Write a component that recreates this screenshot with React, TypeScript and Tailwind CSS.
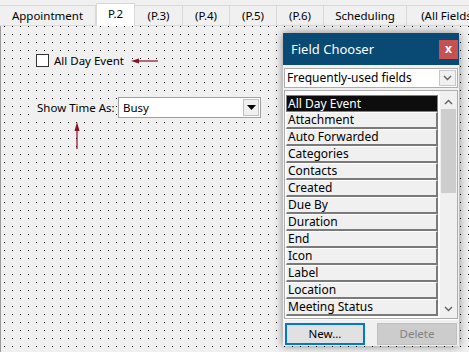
import React from "react";

const tabs = [
  { label: "Appointment", w: 96 },
  { label: "P.2", w: 39, active: true },
  { label: "(P.3)", w: 48 },
  { label: "(P.4)", w: 47 },
  { label: "(P.5)", w: 47 },
  { label: "(P.6)", w: 47 },
  { label: "Scheduling", w: 83 },
  { label: "(All Fields", w: 80 },
];

const fields = [
  "Attachment",
  "Auto Forwarded",
  "Categories",
  "Contacts",
  "Created",
  "Due By",
  "Duration",
  "End",
  "Icon",
  "Label",
  "Location",
  "Meeting Status",
];

function Dots() {
  return (
    <svg className="absolute inset-0 h-full w-full" aria-hidden>
      <defs>
        <pattern id="dots" x="3" y="0" width="8" height="8" patternUnits="userSpaceOnUse">
          <rect x="0" y="0" width="1" height="1" fill="#000" />
        </pattern>
      </defs>
      <rect width="100%" height="100%" fill="url(#dots)" />
    </svg>
  );
}

function ArrowLeft() {
  return (
    <svg width="28" height="8" viewBox="0 0 28 8" aria-hidden>
      <line x1="4" y1="4" x2="27" y2="4" stroke="#8b1020" strokeWidth="1.2" />
      <path d="M0 4 L8 1.5 L8 6.5 Z" fill="#8b1020" />
    </svg>
  );
}

function ArrowUp() {
  return (
    <svg width="8" height="27" viewBox="0 0 8 27" aria-hidden>
      <line x1="4" y1="5" x2="4" y2="27" stroke="#8b1020" strokeWidth="1.2" />
      <path d="M4 0 L6.5 9 L1.5 9 Z" fill="#8b1020" />
    </svg>
  );
}

function Chevron({ up = false }: { up?: boolean }) {
  return (
    <svg width="9" height="6" viewBox="0 0 9 6" aria-hidden>
      <path
        d={up ? "M1 5 L4.5 1.5 L8 5" : "M1 1 L4.5 4.5 L8 1"}
        stroke="#606060"
        strokeWidth="1.4"
        fill="none"
      />
    </svg>
  );
}

export default function App() {
  return (
    <div
      className="relative h-[352px] w-[469px] overflow-hidden bg-[#f0f0f0] text-[11.5px] text-black"
      style={{ fontFamily: '"Noto Sans", "Open Sans", sans-serif' }}
    >
      {/* Tab strip */}
      <div className="flex h-[26px] items-end border-b border-[#d9d9d9]">
        {tabs.map((t) =>
          t.active ? (
            <div
              key={t.label}
              className="relative z-10 -mb-px flex h-[23px] shrink-0 items-center justify-center whitespace-nowrap border border-b-0 border-[#d9d9d9] bg-white pb-[2px] leading-none"
              style={{ width: t.w }}
            >
              {t.label}
            </div>
          ) : (
            <div
              key={t.label}
              className="flex h-[20px] shrink-0 items-center justify-center whitespace-nowrap border-t border-r border-[#d9d9d9] bg-[#f0f0f0] pt-[1px] leading-none"
              style={{ width: t.w }}
            >
              {t.label}
            </div>
          )
        )}
      </div>

      {/* Design canvas */}
      <div className="relative h-[326px] border-l border-[#9b9b9b]">
        <Dots />
        <div className="relative flex flex-col pl-[35px] pt-[27px]">
          <div className="flex items-center">
            <div className="flex h-[15px] items-center whitespace-nowrap bg-[#f0f0f0] pr-[3px]">
              <div className="h-[13px] w-[13px] shrink-0 border border-[#333] bg-white" />
              <span className="ml-[5px] leading-none">All Day Event</span>
            </div>
            <span className="ml-[4px] flex">
              <ArrowLeft />
            </span>
          </div>
          <div className="mt-[29px] flex items-center">
            <span className="flex h-[16px] w-[79px] items-center whitespace-nowrap bg-[#f0f0f0] pl-[1px] leading-none">
              Show Time As:
            </span>
            <div className="ml-[3px] flex h-[21px] w-[143px] items-center border border-[#a0a0a0] bg-white">
              <span className="ml-[4px] flex-1 leading-none">Busy</span>
              <div className="mr-px flex h-[17px] w-[16px] items-center justify-center border border-[#c0c0c0] bg-[#f0f0f0]">
                <svg width="9" height="5" viewBox="0 0 9 5" aria-hidden>
                  <path d="M0 0 L9 0 L4.5 5 Z" fill="#000" />
                </svg>
              </div>
            </div>
          </div>
          <div className="ml-[37px] mt-[4px] flex">
            <ArrowUp />
          </div>
        </div>

        {/* Field Chooser window */}
        <div className="absolute left-[282px] top-[7px] flex h-[313px] w-[176px] flex-col bg-[#f0f0f0] shadow-[0_0_9px_rgba(0,0,0,0.45)]">
          <div className="flex h-[32px] shrink-0 items-center justify-between bg-[#084a74] pl-[8px] pr-[1px]">
            <span className="text-[13px] leading-none text-white">Field Chooser</span>
            <div className="flex h-[19px] w-[19px] items-center justify-center bg-[#c75050] text-[12px] font-bold leading-none text-white">
              x
            </div>
          </div>
          <div className="mx-px mt-[3px] flex h-[20px] shrink-0 items-center border border-[#adadad] bg-white">
            <span className="ml-[2px] flex-1 text-[12px] leading-none">Frequently-used fields</span>
            <div className="mr-px flex h-[16px] w-[17px] items-center justify-center border border-[#c8c8c8] bg-[#f0f0f0]">
              <Chevron />
            </div>
          </div>
          <div className="mx-px mt-[2px] flex h-[229px] shrink-0 border border-[#adadad] bg-white">
            <div className="flex flex-1 flex-col pl-px pt-[4px] text-[12px]">
              <div className="flex h-[17px] items-center border border-[#808080] bg-[#0d0d0d] pl-px leading-none text-white">
                All Day Event
              </div>
              {fields.map((f) => (
                <div
                  key={f}
                  className="flex h-[17px] items-center border-t border-l border-t-white border-l-[#fafafa] border-r-2 border-b-2 border-r-[#7a7a7a] border-b-[#7a7a7a] bg-[#f0f0f0] pl-px leading-none"
                >
                  {f}
                </div>
              ))}
            </div>
            <div className="ml-[2px] flex w-[17px] flex-col bg-[#f0f0f0]">
              <div className="flex h-[18px] items-center justify-center pt-[3px]">
                <Chevron up />
              </div>
              <div className="mx-[1px] h-[84px] bg-[#cdcdcd]" />
              <div className="flex-1" />
              <div className="flex h-[18px] items-center justify-center">
                <Chevron />
              </div>
            </div>
          </div>
          <div className="flex flex-1 items-center justify-between border-t border-white px-[2px] pt-[1px]">
            <div className="flex h-[22px] w-[80px] items-center justify-center border-2 border-[#0078d7] bg-[#e1e1e1] leading-none">
              New...
            </div>
            <div className="flex h-[22px] w-[80px] items-center justify-center border border-[#bfbfbf] bg-[#cccccc] leading-none text-[#838383]">
              Delete
            </div>
          </div>
        </div>
      </div>
    </div>
  );
}
